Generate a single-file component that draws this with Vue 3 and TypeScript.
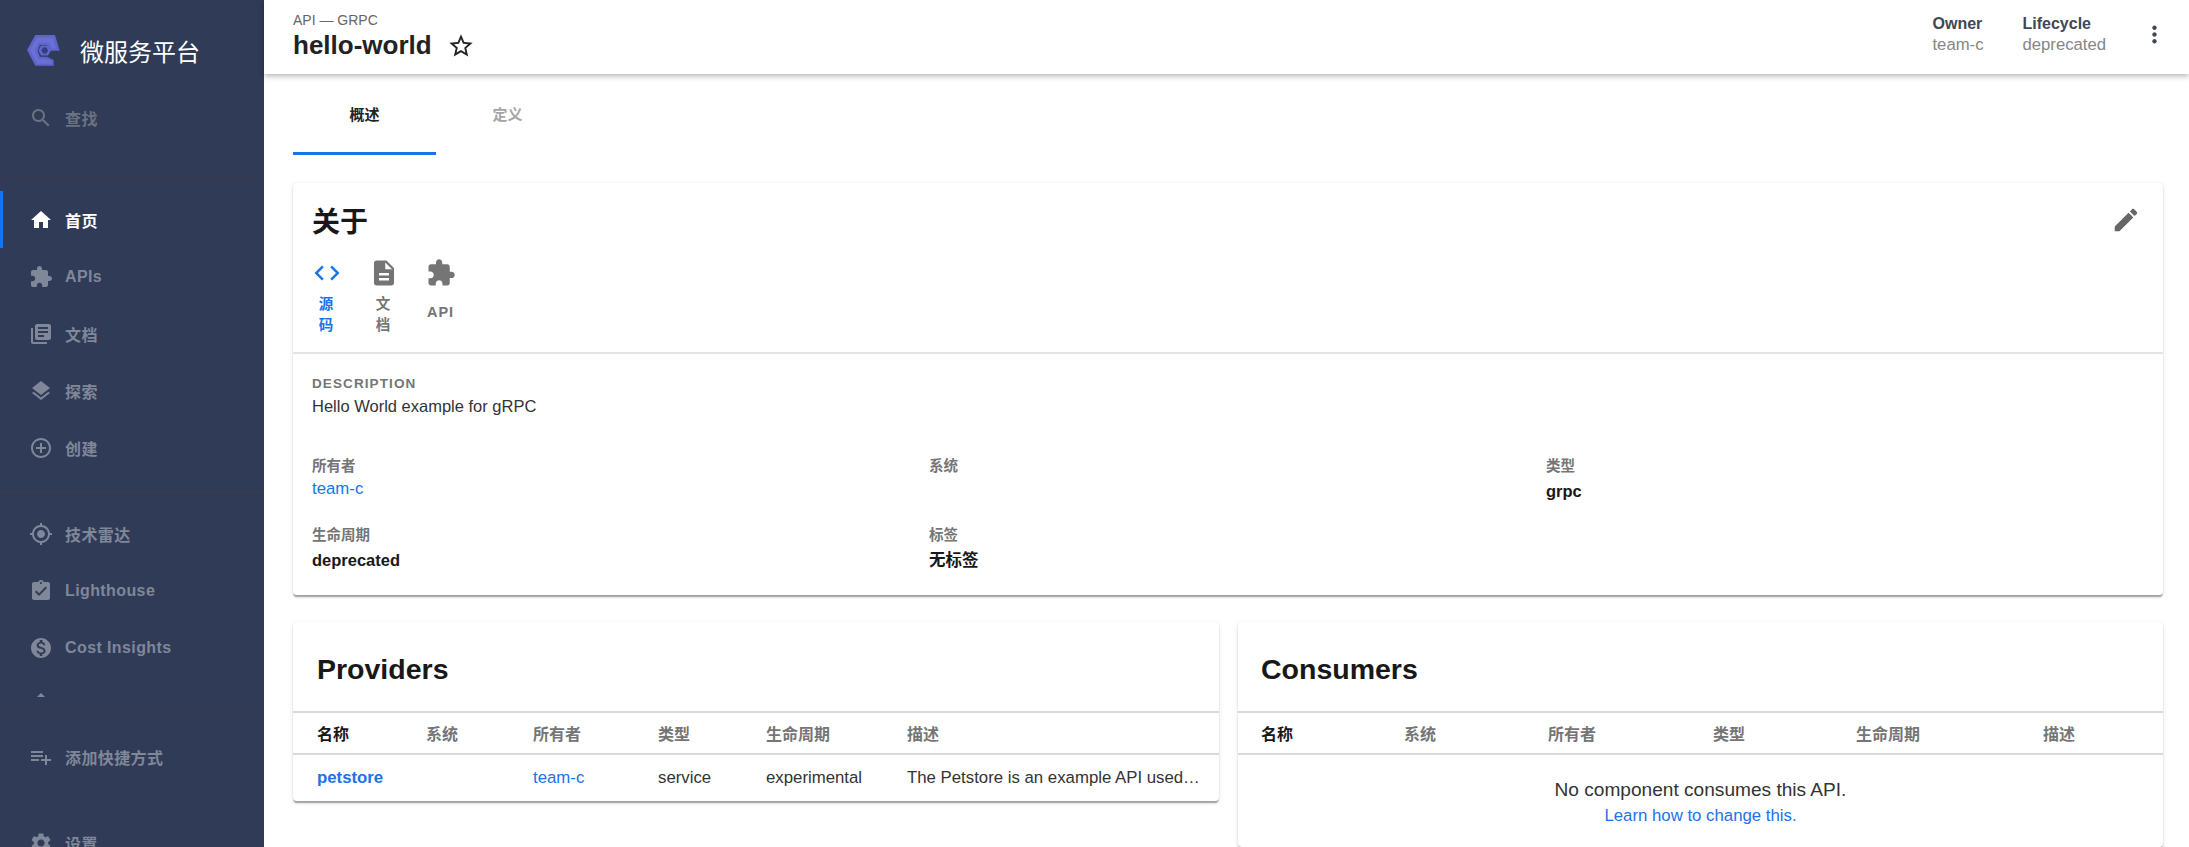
<script setup lang="ts">
const P: Record<string, string> = {
  search: 'M15.5 14h-.79l-.28-.27C15.41 12.59 16 11.11 16 9.5 16 5.91 13.09 3 9.5 3S3 5.91 3 9.5 5.91 16 9.5 16c1.61 0 3.09-.59 4.23-1.57l.27.28v.79l5 4.99L20.49 19l-4.99-5zm-6 0C7.01 14 5 11.99 5 9.5S7.01 5 9.5 5 14 7.01 14 9.5 11.99 14 9.5 14z',
  home: 'M10 20v-6h4v6h5v-8h3L12 3 2 12h3v8z',
  ext: 'M20.5 11H19V7c0-1.1-.9-2-2-2h-4V3.5C13 2.12 11.88 1 10.5 1S8 2.12 8 3.5V5H4c-1.1 0-1.99.9-1.99 2v3.8H3.5c1.49 0 2.7 1.21 2.7 2.7s-1.21 2.7-2.7 2.7H2V20c0 1.1.9 2 2 2h3.8v-1.5c0-1.49 1.21-2.7 2.7-2.7 1.49 0 2.7 1.21 2.7 2.7V22H17c1.1 0 2-.9 2-2v-4h1.5c1.38 0 2.5-1.12 2.5-2.5S21.88 11 20.5 11z',
  lib: 'M4 6H2v14c0 1.1.9 2 2 2h14v-2H4V6zm16-4H8c-1.1 0-2 .9-2 2v12c0 1.1.9 2 2 2h12c1.1 0 2-.9 2-2V4c0-1.1-.9-2-2-2zm-1 9H9V9h10v2zm-4 4H9v-2h6v2zm4-8H9V5h10v2z',
  layers: 'M11.99 18.54l-7.37-5.73L3 14.07l9 7 9-7-1.63-1.27-7.38 5.74zM12 16l7.36-5.73L21 9l-9-7-9 7 1.63 1.27L12 16z',
  add: 'M13 7h-2v4H7v2h4v4h2v-4h4v-2h-4V7zm-1-5C6.48 2 2 6.48 2 12s4.48 10 10 10 10-4.48 10-10S17.52 2 12 2zm0 18c-4.41 0-8-3.59-8-8s3.59-8 8-8 8 3.59 8 8-3.59 8-8 8z',
  gps: 'M12 8c-2.21 0-4 1.79-4 4s1.79 4 4 4 4-1.79 4-4-1.79-4-4-4zm8.94 3c-.46-4.17-3.77-7.48-7.94-7.94V1h-2v2.06C6.83 3.52 3.52 6.83 3.06 11H1v2h2.06c.46 4.17 3.77 7.48 7.94 7.94V23h2v-2.06c4.17-.46 7.48-3.77 7.94-7.94H23v-2h-2.06zM12 19c-3.87 0-7-3.13-7-7s3.13-7 7-7 7 3.13 7 7-3.13 7-7 7z',
  assign: 'M19 3h-4.18C14.4 1.84 13.3 1 12 1c-1.3 0-2.4.84-2.82 2H5c-1.1 0-2 .9-2 2v14c0 1.1.9 2 2 2h14c1.1 0 2-.9 2-2V5c0-1.1-.9-2-2-2zm-7 0c.55 0 1 .45 1 1s-.45 1-1 1-1-.45-1-1 .45-1 1-1zm-2 14l-4-4 1.41-1.41L10 14.17l6.59-6.59L18 9l-8 8z',
  money: 'M12 2C6.48 2 2 6.48 2 12s4.48 10 10 10 10-4.48 10-10S17.52 2 12 2zm1.41 16.09V20h-2.67v-1.93c-1.71-.36-3.16-1.46-3.27-3.4h1.96c.1 1.05.82 1.87 2.65 1.87 1.96 0 2.4-.98 2.4-1.59 0-.83-.44-1.61-2.67-2.14-2.48-.6-4.18-1.62-4.18-3.67 0-1.72 1.39-2.84 3.11-3.21V4h2.67v1.95c1.86.45 2.79 1.86 2.85 3.39H14.3c-.05-1.11-.64-1.87-2.22-1.87-1.5 0-2.4.68-2.4 1.64 0 .84.65 1.39 2.67 1.91s4.18 1.39 4.18 3.91c-.01 1.83-1.38 2.83-3.12 3.16z',
  playlist: 'M14 10H2v2h12v-2zm0-4H2v2h12V6zm4 8v-4h-2v4h-4v2h4v4h2v-4h4v-2h-4zM2 16h8v-2H2v2z',
  settings: 'M19.14 12.94c.04-.3.06-.61.06-.94 0-.32-.02-.64-.07-.94l2.03-1.58c.18-.14.23-.41.12-.61l-1.92-3.32c-.12-.22-.37-.29-.59-.22l-2.39.96c-.5-.38-1.03-.7-1.62-.94l-.36-2.54c-.04-.24-.24-.41-.48-.41h-3.84c-.24 0-.43.17-.47.41l-.36 2.54c-.59.24-1.13.57-1.62.94l-2.39-.96c-.22-.08-.47 0-.59.22L2.74 8.87c-.12.21-.08.47.12.61l2.03 1.58c-.05.3-.09.63-.09.94s.02.64.07.94l-2.03 1.58c-.18.14-.23.41-.12.61l1.92 3.32c.12.22.37.29.59.22l2.39-.96c.5.38 1.03.7 1.62.94l.36 2.54c.05.24.24.41.48.41h3.84c.24 0 .44-.17.47-.41l.36-2.54c.59-.24 1.13-.56 1.62-.94l2.39.96c.22.08.47 0 .59-.22l1.92-3.32c.12-.22.07-.47-.12-.61l-2.01-1.58zM12 15.6c-1.98 0-3.6-1.62-3.6-3.6s1.62-3.6 3.6-3.6 3.6 1.62 3.6 3.6-1.62 3.6-3.6 3.6z',
  star: 'M22 9.24l-7.19-.62L12 2 9.19 8.63 2 9.24l5.46 4.73L5.82 21 12 17.27 18.18 21l-1.63-7.03L22 9.24zM12 15.4l-3.76 2.27 1-4.28-3.32-2.88 4.38-.38L12 6.1l1.71 4.04 4.38.38-3.32 2.88 1 4.28L12 15.4z',
  more: 'M12 8c1.1 0 2-.9 2-2s-.9-2-2-2-2 .9-2 2 .9 2 2 2zm0 2c-1.1 0-2 .9-2 2s.9 2 2 2 2-.9 2-2-.9-2-2-2zm0 6c-1.1 0-2 .9-2 2s.9 2 2 2 2-.9 2-2-.9-2-2-2z',
  edit: 'M3 17.25V21h3.75L17.81 9.94l-3.75-3.75L3 17.25zM20.71 7.04c.39-.39.39-1.02 0-1.41l-2.34-2.34c-.39-.39-1.02-.39-1.41 0l-1.83 1.83 3.75 3.75 1.83-1.83z',
  code: 'M9.4 16.6L4.8 12l4.6-4.6L8 6l-6 6 6 6 1.4-1.4zm5.2 0l4.6-4.6-4.6-4.6L16 6l6 6-6 6-1.4-1.4z',
  desc: 'M14 2H6c-1.1 0-1.99.9-1.99 2L4 20c0 1.1.89 2 1.99 2H18c1.1 0 2-.9 2-2V8l-6-6zm2 16H8v-2h8v2zm0-4H8v-2h8v2zm-3-5V3.5L18.5 9H13z',
}
const navA = [
  { icon: 'home', label: '首页', active: true },
  { icon: 'ext', label: 'APIs' },
  { icon: 'lib', label: '文档' },
  { icon: 'layers', label: '探索' },
  { icon: 'add', label: '创建' },
]
const navB = [
  { icon: 'gps', label: '技术雷达' },
  { icon: 'assign', label: 'Lighthouse' },
  { icon: 'money', label: 'Cost Insights' },
]
const links = [
  { icon: 'code', lines: ['源', '码'], on: true },
  { icon: 'desc', lines: ['文', '档'] },
  { icon: 'ext', lines: ['API'] },
]
const cols = ['名称', '系统', '所有者', '类型', '生命周期', '描述']
</script>

<template>
  <div class="app">
    <aside class="side">
      <div class="brand">
        <svg class="logo" viewBox="0 0 33 31">
          <defs>
            <pattern id="dots" width="1.6" height="1.6" patternUnits="userSpaceOnUse">
              <circle cx="0.8" cy="0.8" r="0.45" fill="#9499f0" />
            </pattern>
          </defs>
          <path fill="#5f64cc" d="M8.300 0H28L32.700 15.700H23.300L20 10H13L10.700 15.700L13 21.700H20L26.700 25V30.700H8.300L0 15z" />
          <path fill="url(#dots)" d="M10 2.500H26L29 13.500H24.500L21.500 7.500H11.500L8 15.700L11.500 24H19.500L24.500 26.500V28.500H10L3 15z" />
          <path fill="#6065cf" d="M14 10.500H21L24 15.500L21 20.500H14L11.500 15.500z" />
          <path fill="#343d82" d="M16 12.500H19.500L21 15.500L19.500 18.500H16L14.500 15.500z" />
        </svg>
        <span class="brand-t">微服务平台</span>
      </div>
      <div class="item search">
        <svg class="ico" viewBox="0 0 24 24"><path :d="P.search" /></svg>
        <span>查找</span>
      </div>
      <hr class="rule first" />
      <div v-for="n in navA" :key="n.label" class="item" :class="{ active: n.active }">
        <svg class="ico" viewBox="0 0 24 24"><path :d="P[n.icon]" /></svg>
        <span>{{ n.label }}</span>
      </div>
      <hr class="rule strong" />
      <div v-for="n in navB" :key="n.label" class="item">
        <svg class="ico" viewBox="0 0 24 24"><path :d="P[n.icon]" /></svg>
        <span>{{ n.label }}</span>
      </div>
      <div class="caret-wrap"><i class="caret"></i></div>
      <hr class="rule" />
      <div class="item add">
        <svg class="ico" viewBox="0 0 24 24"><path :d="P.playlist" /></svg>
        <span>添加快捷方式</span>
      </div>
      <hr class="rule" />
      <div class="item last">
        <svg class="ico" viewBox="0 0 24 24"><path :d="P.settings" /></svg>
        <span>设置</span>
      </div>
    </aside>

    <main class="main">
      <header class="top">
        <div class="top-l">
          <div class="kind">API — GRPC</div>
          <div class="name-row">
            <h1>hello-world</h1>
            <svg class="star" viewBox="0 0 24 24"><path :d="P.star" /></svg>
          </div>
        </div>
        <div class="meta"><b>Owner</b><span>team-c</span></div>
        <div class="meta"><b>Lifecycle</b><span>deprecated</span></div>
        <svg class="more" viewBox="0 0 24 24"><path :d="P.more" /></svg>
      </header>

      <nav class="tabs">
        <div class="tab on">概述</div>
        <div class="tab">定义</div>
      </nav>

      <div class="content">
        <section class="card about">
          <div class="about-head">
            <h2>关于</h2>
            <svg class="edit" viewBox="0 0 24 24"><path :d="P.edit" /></svg>
          </div>
          <div class="links">
            <div v-for="l in links" :key="l.icon" class="lnk" :class="{ on: l.on }">
              <svg viewBox="0 0 24 24"><path :d="P[l.icon]" /></svg>
              <div class="lnk-t" :class="{ two: l.lines.length > 1 }"><span v-for="t in l.lines" :key="t">{{ t }}</span></div>
            </div>
          </div>
          <div class="about-body">
            <div class="cap">DESCRIPTION</div>
            <p class="desc">Hello World example for gRPC</p>
            <div class="grid">
              <div class="f"><label>所有者</label><a>team-c</a></div>
              <div class="f"><label>系统</label></div>
              <div class="f"><label>类型</label><b>grpc</b></div>
              <div class="f"><label>生命周期</label><b>deprecated</b></div>
              <div class="f"><label>标签</label><b>无标签</b></div>
            </div>
          </div>
        </section>

        <div class="pair">
          <section class="card tbl prov">
            <h3>Providers</h3>
            <div class="thead">
              <span v-for="(c, i) in cols" :key="c" :class="{ first: i === 0 }">{{ c }}</span>
            </div>
            <div class="tr">
              <a class="nm">petstore</a>
              <span></span>
              <a>team-c</a>
              <span>service</span>
              <span>experimental</span>
              <span class="ell">The Petstore is an example API used…</span>
            </div>
          </section>
          <section class="card tbl cons">
            <h3>Consumers</h3>
            <div class="thead">
              <span v-for="(c, i) in cols" :key="c" :class="{ first: i === 0 }">{{ c }}</span>
            </div>
            <div class="empty">
              <p>No component consumes this API.</p>
              <a>Learn how to change this.</a>
            </div>
          </section>
        </div>
      </div>
    </main>
  </div>
</template>

<style>
html, body { margin: 0; overflow: hidden; background: #fff; }
</style>

<style scoped>
.app {
  display: flex;
  width: 2189px;
  height: 847px;
  overflow: hidden;
  font-family: "Liberation Sans", "Noto Sans CJK SC", sans-serif;
  color: #181818;
}
.side {
  width: 264px;
  flex: none;
  background: #2f3b57;
  display: flex;
  flex-direction: column;
  color: #7f8799;
  overflow: hidden;
}
.brand { display: flex; align-items: center; height: 100px; padding-left: 27px; flex: none; }
.logo { width: 33px; height: 31px; margin-right: 20px; }
.brand-t { font-size: 24px; color: #fff; }
.item {
  height: 57px;
  flex: none;
  box-sizing: border-box;
  display: flex;
  align-items: center;
  padding-left: 29px;
  font-size: 16px;
  font-weight: 700;
  letter-spacing: 0.4px;
}
.item .ico { width: 24px; height: 24px; fill: currentColor; margin-right: 12px; flex: none; }
.item.search { height: 34px; color: #6b7282; margin-top: 1px; }
.item.active { color: #fff; border-left: 3px solid #1a73e8; padding-left: 26px; }
.rule { width: 100%; height: 1px; margin: 0; border: 0; background: #3a3d49; flex: none; }
.rule.first { margin-top: 42px; margin-bottom: 13px; }
.rule.strong { margin-top: 15px; margin-bottom: 12px; height: 2px; }
.caret-wrap { height: 37px; flex: none; display: flex; justify-content: center; width: 82px; }
.caret {
  margin-top: 17px;
  border-left: 4px solid transparent;
  border-right: 4px solid transparent;
  border-bottom: 4px solid #7f8799;
  height: 0;
}
.item.add { height: 85px; }
.item.last { margin-top: 14px; }

.main { flex: 1; min-width: 0; display: flex; flex-direction: column; }
.top {
  height: 74px;
  flex: none;
  box-sizing: border-box;
  display: flex;
  align-items: center;
  padding: 0 21px 6px 29px;
  background: #fff;
  box-shadow: 0 2px 6px rgba(0, 0, 0, 0.3);
  position: relative;
}
.top-l { flex: 1; padding-top: 5px; }
.kind { font-size: 14px; color: #666; line-height: 16px; }
.name-row { display: flex; align-items: center; height: 32px; margin-top: 2px; }
h1 { margin: 0; font-size: 26px; font-weight: 700; color: #222; }
.star { width: 28px; height: 28px; margin-left: 15px; fill: #222; }
.meta { display: flex; flex-direction: column; line-height: 21px; margin-right: 39px; }
.meta:first-of-type { margin-right: 38px; }
.meta b { color: #404756; font-weight: 700; font-size: 16px; }
.meta span { color: #868686; font-size: 16.7px; }
.more { width: 27px; height: 27px; fill: #404756; margin-left: -4px; flex: none; }

.tabs { display: flex; height: 81px; flex: none; padding-left: 29px; }
.tab {
  width: 143px;
  height: 81px;
  box-sizing: border-box;
  text-align: center;
  padding-top: 29px;
  font-size: 15px;
  font-weight: 700;
  color: #a5a5a5;
}
.tab.on { color: #222; border-bottom: 3px solid #1a73e8; }

.content { padding: 28px 26px 0 29px; display: flex; flex-direction: column; gap: 27px; }
.card {
  background: #fff;
  border-radius: 4px;
  box-shadow: 0 2.8px 1.4px -1.4px rgba(0, 0, 0, 0.2), 0 1.4px 1.4px rgba(0, 0, 0, 0.14), 0 1.4px 4.2px rgba(0, 0, 0, 0.12);
}
.about { height: 412px; display: flex; flex-direction: column; }
.about-head { display: flex; justify-content: space-between; align-items: center; padding: 16px 22.5px 0 19px; height: 58px; box-sizing: border-box; flex: none; }
h2 { margin: 0; font-size: 28px; font-weight: 700; color: #181818; }
.edit { width: 30px; height: 30px; fill: #666; }
.links { display: flex; height: 113px; box-sizing: border-box; padding: 17px 0 0 5px; border-bottom: 2px solid #e4e4e4; flex: none; }
.lnk { width: 57px; display: flex; flex-direction: column; align-items: center; color: #757575; font-size: 14.5px; font-weight: 700; letter-spacing: 1px; }
.lnk svg { width: 30px; height: 30px; fill: currentColor; flex: none; }
.lnk.on { color: #1a73e8; }
.lnk-t { display: flex; flex-direction: column; flex: 1; justify-content: center; line-height: 21px; align-items: center; padding-bottom: 21px; margin-top: 6px; }
.lnk-t.two { padding-bottom: 27px; }
.about-body { padding: 21px 19px 0; }
.cap { font-size: 13.5px; font-weight: 700; color: #757575; letter-spacing: 1.1px; line-height: 18px; }
.desc { margin: 1px 0 0; font-size: 16.5px; line-height: 24px; color: #333; }
.grid { display: grid; grid-template-columns: repeat(3, 617px); margin-top: 38px; row-gap: 22.5px; }
.f { display: flex; flex-direction: column; height: 46px; }
.f label { font-size: 14.5px; font-weight: 700; color: #757575; line-height: 20px; }
.f a { font-size: 16.8px; color: #1a73e8; line-height: 26px; }
.f b { font-size: 16.5px; font-weight: 700; color: #181818; line-height: 26px; margin-top: 2px; }

.pair { display: grid; grid-template-columns: 926px 925px; gap: 19px; align-items: start; }
.tbl h3 { margin: 0; height: 91px; line-height: 95px; padding-left: 24px; font-size: 28.5px; font-weight: 700; color: #181818; border-bottom: 2px solid #d9d9d9; box-sizing: border-box; }
.thead, .tr { display: grid; align-items: center; padding-left: 24px; }
.thead { height: 42px; border-bottom: 2px solid #d9d9d9; font-size: 16px; font-weight: 700; color: #757575; box-sizing: border-box; }
.thead .first { color: #181818; }
.prov .thead, .prov .tr { grid-template-columns: 109px 107px 125px 108px 141px 1fr; }
.cons .thead { grid-template-columns: 143px 144px 165px 143px 187px 1fr; padding-left: 23px; }
.cons h3 { padding-left: 23px; }
.tr { height: 46px; font-size: 16.8px; color: #333; }
.tr a { color: #1a73e8; }
.tr .nm { font-weight: 700; }
.ell { white-space: nowrap; overflow: hidden; }
.cons { height: 225px; }
.empty { text-align: center; padding-top: 22px; }
.empty p { margin: 0; font-size: 19.1px; line-height: 26px; color: #333; }
.empty a { font-size: 16.8px; line-height: 26px; color: #1a73e8; display: block; }
</style>
